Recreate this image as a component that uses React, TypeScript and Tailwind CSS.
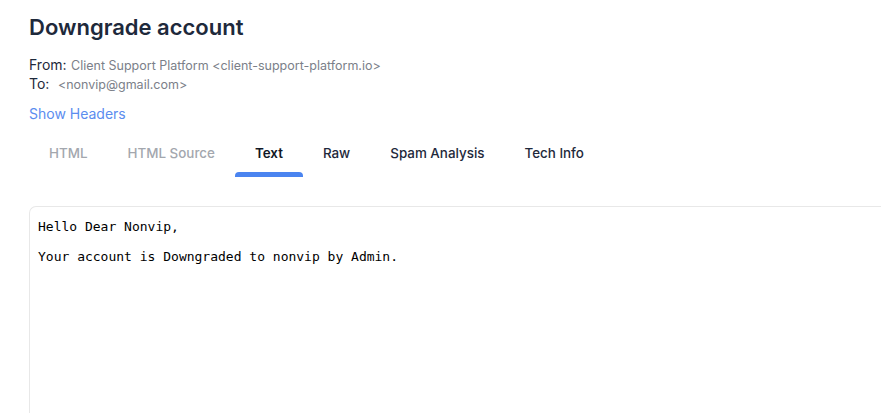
export default function App() {
  const tabs = [
    { label: "HTML", state: "disabled" },
    { label: "HTML Source", state: "disabled" },
    { label: "Text", state: "active" },
    { label: "Raw", state: "normal" },
    { label: "Spam Analysis", state: "normal" },
    { label: "Tech Info", state: "normal" },
  ];

  return (
    <div className="h-screen bg-white font-['Inter',sans-serif] text-[#1e293b] overflow-hidden">
      <div className="pl-[29px] pt-[13px]">
        <h1 className="text-[22px] font-semibold leading-[28px]">Downgrade account</h1>

        <div className="mt-[14px]">
          <div className="h-[19px] leading-[19px]">
            <span className="text-[14px] leading-[19px]">From:</span>{" "}
            <span className="text-[12.5px] leading-[19px] text-[#7b8089]">
              Client Support Platform &lt;client-support-platform.io&gt;
            </span>
          </div>
          <div className="h-[19px] leading-[19px]">
            <span className="text-[14px] leading-[19px]">To:</span>{" "}
            <span className="ml-1 text-[12.5px] leading-[19px] text-[#7b8089]">&lt;nonvip@gmail.com&gt;</span>
          </div>
        </div>

        <div className="mt-[11px] text-[14px] leading-[20px] text-[#5b8def]">Show Headers</div>

        <div className="mt-[10px] flex">
          {tabs.map((t) => (
            <div key={t.label} className="relative px-5 pt-[9px] pb-[14px] text-[13.4px] leading-[20px] font-medium">
              <span
                className={
                  t.state === "disabled"
                    ? "text-[#a3a7ae]"
                    : t.state === "active"
                    ? "text-[#111827] font-semibold"
                    : "text-[#1e293b]"
                }
              >
                {t.label}
              </span>
              {t.state === "active" && (
                <div className="absolute left-0 right-0 bottom-0 h-[5px] rounded-t-[4px] bg-[#4a84f0]" />
              )}
            </div>
          ))}
        </div>

        <div className="mt-[29px] h-[260px] rounded-l-[7px] border border-r-0 border-[#e8e8e8] pl-2 pt-[12px]">
          <pre className="font-['DejaVu_Sans_Mono',monospace] text-[13px] leading-[15px] text-black whitespace-pre-wrap">
            {"Hello Dear Nonvip,\n\nYour account is Downgraded to nonvip by Admin."}
          </pre>
        </div>
      </div>
    </div>
  );
}
